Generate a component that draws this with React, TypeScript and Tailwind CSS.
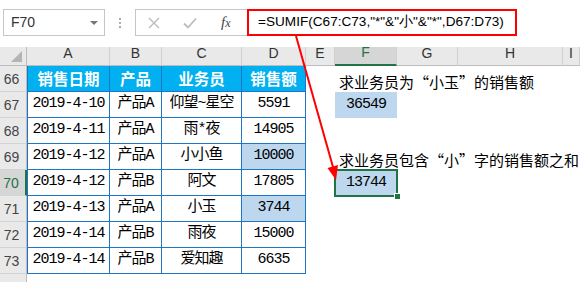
import React from "react";

type Row = {
  num: number;
  cells: string[];
  hlD?: boolean;
};

const rows: Row[] = [
  { num: 67, cells: ["2019-4-10", "产品A", "仰望~星空", "5591"] },
  { num: 68, cells: ["2019-4-11", "产品A", "雨*夜", "14905"] },
  { num: 69, cells: ["2019-4-12", "产品A", "小小鱼", "10000"], hlD: true },
  { num: 70, cells: ["2019-4-12", "产品B", "阿文", "17805"] },
  { num: 71, cells: ["2019-4-13", "产品A", "小玉", "3744"], hlD: true },
  { num: 72, cells: ["2019-4-14", "产品B", "雨夜", "15000"] },
  { num: 73, cells: ["2019-4-14", "产品B", "爱知趣", "6635"] },
];

const colLetters = ["A", "B", "C", "D", "E", "F", "G", "H", "I"];
const headers = ["销售日期", "产品", "业务员", "销售额"];

const monoCell =
  "[font-family:'Liberation_Mono','Noto_Sans_CJK_SC',monospace] text-[15px] tracking-[-1px] text-black";
const noteText =
  "[font-family:'Noto_Sans_CJK_SC',sans-serif] text-[15px] leading-[18px] text-black whitespace-nowrap";

const RowHead = ({ n, active }: { n?: number; active?: boolean }) => (
  <div
    className={`flex items-end justify-center pr-[3px] pb-[1px] text-[14px] border-b border-[#d4d4d4] ${
      active
        ? "bg-[#d6d6d6] text-[#217346] border-r-2 border-r-[#217346]"
        : "bg-[#e9e9e9] text-[#444] border-r border-r-[#bdbdbd]"
    }`}
  >
    {n}
  </div>
);

const TableCell = ({
  text,
  first,
  hl,
}: {
  text: string;
  first?: boolean;
  hl?: boolean;
}) => (
  <div
    className={`flex items-center justify-center border-r border-b border-[#1f74c4] ${
      first ? "border-l" : ""
    } ${hl ? "bg-[#bdd7ee]" : "bg-white"} ${monoCell}`}
  >
    {text}
  </div>
);

const Empty = () => <div />;

export default function App() {
  return (
    <div className="relative w-[580px] h-[282px] overflow-hidden bg-white [font-family:'Liberation_Sans',sans-serif]">
      {/* formula bar */}
      <div className="h-[47px] flex items-start pt-[9px] bg-white">
        <div className="ml-[3px] w-[102px] h-[27px] border border-[#c6c6c6] bg-white flex items-center justify-between pl-[7px] pr-[6px]">
          <span className="text-[14px] text-[#333]">F70</span>
          <span className="w-0 h-0 border-l-[4px] border-r-[4px] border-t-[4px] border-l-transparent border-r-transparent border-t-[#777]" />
        </div>
        <div className="w-[30px] h-[27px] flex flex-col items-center justify-center gap-[2px]">
          <span className="w-[2px] h-[2px] bg-[#aaa]" />
          <span className="w-[2px] h-[2px] bg-[#aaa]" />
          <span className="w-[2px] h-[2px] bg-[#aaa]" />
        </div>
        <div className="w-[113px] h-[27px] border border-[#c6c6c6] bg-white flex items-center">
          <svg width="12" height="12" viewBox="0 0 12 12" className="ml-[12px]">
            <path d="M1 1 L11 11 M11 1 L1 11" stroke="#bcbcbc" strokeWidth="1.4" />
          </svg>
          <svg width="14" height="12" viewBox="0 0 14 12" className="ml-[23px]">
            <path d="M1 6.5 L5 10.5 L13 1.5" stroke="#bcbcbc" strokeWidth="1.8" fill="none" />
          </svg>
          <span className="ml-[24px] [font-family:'Liberation_Serif',serif] italic text-[15px] text-[#444]">
            f<span className="text-[12px]">x</span>
          </span>
        </div>
        <div className="-ml-[1px] w-[270px] h-[27px] border-2 border-[#ff0000] bg-white flex items-center pl-[9px] text-[13.6px] text-black whitespace-nowrap">
          =SUMIF(C67:C73,"*"&"小"&"*",D67:D73)
        </div>
      </div>

      {/* sheet grid */}
      <div className="grid grid-cols-[27px_83px_52px_80px_64px_29px_62px_61px_105px_1fr] grid-rows-[19px_repeat(9,26px)]">
        {/* column header row */}
        <div className="relative bg-[#e9e9e9] border-r border-b border-[#bdbdbd]">
          <svg className="absolute right-[4px] bottom-[3px]" width="11" height="11" viewBox="0 0 11 11">
            <polygon points="11,0 11,11 0,11" fill="#b4b4b4" />
          </svg>
        </div>
        {colLetters.map((c) => (
          <div
            key={c}
            className={`flex items-end justify-center pb-[1px] text-[14px] border-r border-[#d0d0d0] ${
              c === "F"
                ? "bg-[#d6d6d6] text-[#217346] border-b-2 border-b-[#217346]"
                : "bg-[#e9e9e9] text-[#333] border-b border-b-[#bdbdbd]"
            }`}
          >
            {c}
          </div>
        ))}

        {/* row 66 */}
        <RowHead n={66} />
        {headers.map((h, i) => (
          <div
            key={h}
            className={`flex items-center justify-center bg-[#00b0f0] border-r border-b border-[#1f74c4] ${
              i === 0 ? "border-l" : ""
            } [font-family:'Noto_Sans_CJK_SC',sans-serif] font-bold text-[15.5px] text-white`}
          >
            {h}
          </div>
        ))}
        <Empty />
        <div className="flex items-end pl-[4px] pb-[1px]">
          <span className={noteText}>求业务员为“小玉”的销售额</span>
        </div>
        <Empty />
        <Empty />
        <Empty />

        {rows.map((r) => (
          <React.Fragment key={r.num}>
            <RowHead n={r.num} active={r.num === 70} />
            {r.cells.map((c, i) => (
              <TableCell
                key={i}
                text={c}
                first={i === 0}
                hl={i === 3 && r.hlD}
              />
            ))}
            <Empty />
            {r.num === 67 ? (
              <div className={`flex items-center justify-center bg-[#bdd7ee] ${monoCell}`}>
                36549
              </div>
            ) : r.num === 69 ? (
              <div className="flex items-end pl-[4px] pb-[1px]">
                <span className={noteText}>求业务员包含“小”字的销售额之和</span>
              </div>
            ) : r.num === 70 ? (
              <div className={`relative flex items-center justify-center bg-[#bdd7ee] ${monoCell}`}>
                13744
                <span className="absolute -inset-[1px] border-2 border-[#217346]" />
                <span className="absolute -right-[4px] -bottom-[4px] w-[7px] h-[7px] bg-[#217346] border border-white" />
              </div>
            ) : (
              <Empty />
            )}
            <Empty />
            <Empty />
            <Empty />
          </React.Fragment>
        ))}

        {/* row 74, number falls below the window */}
        <RowHead />
        <Empty />
        <Empty />
        <Empty />
        <Empty />
        <Empty />
        <Empty />
        <Empty />
        <Empty />
        <Empty />
      </div>

      {/* red annotation arrow */}
      <svg
        className="absolute left-0 top-0 pointer-events-none"
        width="580"
        height="282"
        viewBox="0 0 580 282"
      >
        <line x1="296" y1="36" x2="333" y2="167" stroke="#ff0000" strokeWidth="2" />
        <polygon points="336,180 338,165 327.5,168" fill="#ff0000" />
      </svg>
    </div>
  );
}
